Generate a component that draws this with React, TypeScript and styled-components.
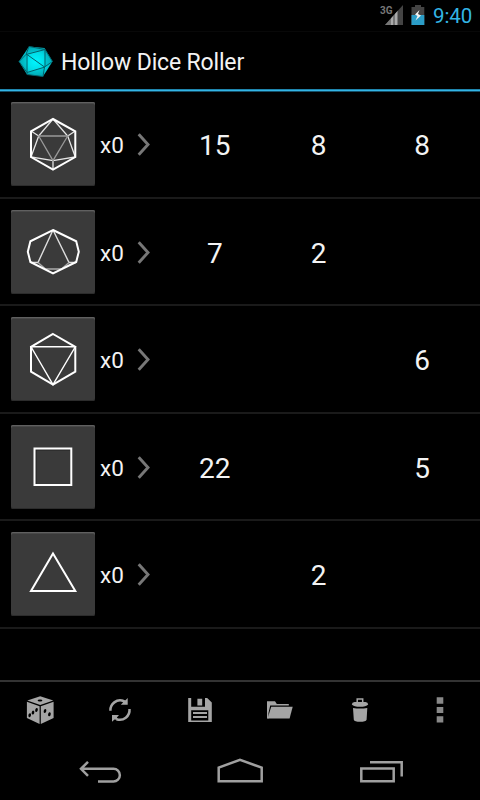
import React from "react";
import styled, { createGlobalStyle } from "styled-components";

const GlobalStyle = createGlobalStyle`
  * { box-sizing: border-box; }
  html, body { margin: 0; background: #000; }
  body { font-family: Roboto, "Noto Sans", sans-serif; color: #f3f3f3; overflow: hidden; }
  svg { display: block; flex: none; }
`;

const Screen = styled.div`
  width: 480px;
  height: 800px;
  background: #000;
  display: flex;
  flex-direction: column;
`;

const StatusBar = styled.div`
  height: 32px;
  border-bottom: 1px solid #080808;
  display: flex;
  justify-content: flex-end;
  align-items: flex-start;
  padding-right: 8px;
`;

const Clock = styled.span`
  width: 39px;
  margin-left: 8px;
  font-size: 20.5px;
  line-height: 32px;
  letter-spacing: -0.1px;
  color: #33b5e5;
  white-space: nowrap;
`;

const NetworkLabel = styled.span`
  font-size: 10px;
  font-weight: 700;
  line-height: 12px;
  padding-top: 5px;
  width: 5px;
  color: #777;
  white-space: nowrap;
`;

const ActionBar = styled.header`
  height: 60px;
  background: linear-gradient(#1f85ad 0 1px, #33b5e5 1px 2px, #14506a 2px) bottom / 100% 3px no-repeat;
  display: flex;
  align-items: center;
  padding-left: 17px;
`;

const Title = styled.h1`
  margin: 1px 0 0 6px;
  font-size: 23px;
  font-weight: 400;
  line-height: 30px;
  letter-spacing: -0.16px;
  white-space: nowrap;
`;

const DiceList = styled.main`
  flex: 1;
  margin-top: -1px;
  display: grid;
  grid-template-rows: 108px 107px 108px 107px 108px;
`;

const DiceRow = styled.div`
  display: grid;
  grid-template-columns: 84px 31px 27px 10px repeat(3, 103.7px);
  padding: 11px 0 0 11px;
  border-bottom: 2px solid #1a1a1a;
`;

const DieButton = styled.button`
  width: 84px;
  height: 84px;
  padding: 0;
  border: 0;
  border-radius: 2px;
  background: #3a3a3a;
  box-shadow: inset 0 1px #606060, inset 0 2px #484848, inset 0 -1px #2c2c2c;
`;

const Count = styled.span`
  padding-left: 5px;
  font-size: 22.5px;
  line-height: 87px;
  white-space: nowrap;
`;

const Result = styled.span`
  font-size: 28px;
  line-height: 88px;
  height: 84px;
  text-align: center;
`;

const Toolbar = styled.footer`
  height: 60px;
  border-top: 2px solid #333;
  display: grid;
  grid-template-columns: repeat(6, 80px);
`;

const ToolButton = styled.button`
  padding: 0;
  border: 0;
  background: none;
`;

const NavBar = styled.nav`
  height: 60px;
  display: flex;
  justify-content: space-between;
  padding: 0 60px;
`;

const D20 = () => (
  <>
    <g fill="none" stroke="#e6e6e6" strokeWidth="1.3">
      <path d="M42 17 27.7 34 20 29M27.7 34 20 55 42 58.7 64.3 55 56.7 34 42 17M56.7 34 64.3 29M42 58.7V68" />
      <path d="M27.7 34H56.7L42 58.7Z" stroke="#999" />
    </g>
    <path d="M42 17 64.3 29.3V55L42 67.7 20 55V29.3Z" />
  </>
);
const D10 = () => (
  <>
    <path d="M42 20 27 52.5H20M42 20 58 52.5H65" strokeWidth="1.4" stroke="#ddd" />
    <path d="M27 52.5 34.5 59H50.5L58 52.5" strokeWidth="1.4" stroke="#aaa" />
    <path d="M42 20 65.2 31.3 67.8 41.7 65.2 52 42 63.3 19.4 52 16.8 41.7 19.4 31.3Z" />
  </>
);
const D8 = () => (
  <>
    <path d="M20 29.8H64.3L42 67.5Z" strokeWidth="1.4" />
    <path d="M42 17 64.3 29.8V54.7L42 67.5 20 54.7V29.8Z" />
  </>
);
const D6 = () => (
  <>
    <path d="M25 59V25H59" stroke="#222" strokeWidth="1" />
    <path d="M23.5 23.5H60.3V60H23.5Z" />
  </>
);
const D4 = () => <path d="M42 21.5 64.3 59H20Z" />;

const dice = [
  { Shape: D20, results: ["15", "8", "8"] },
  { Shape: D10, results: ["7", "2", ""] },
  { Shape: D8, results: ["", "", "6"] },
  { Shape: D6, results: ["22", "", "5"] },
  { Shape: D4, results: ["", "2", ""] },
];

const Logo = () => (
  <svg width="38" height="38" viewBox="0 0 38 38">
    <defs>
      <radialGradient id="glow">
        <stop offset="0" stopColor="#00f6ff" />
        <stop offset="0.6" stopColor="#00dce6" />
        <stop offset="1" stopColor="#00b5c0" />
      </radialGradient>
    </defs>
    <path d="M12 3.5 27.5 5 35.5 18.5 26 33.5 10 31.5 2 18.5Z" fill="url(#glow)" />
    <path d="M12 3.5 9 11.5 2 18.5 10 29.5 10 31.5 26 33.5 27.5 24 35.5 18.5 28 6.5 12 3.5M9 11.5 28 6.5V24L10 29.5V11.5L27.5 24" fill="none" stroke="#045f68" strokeWidth="1" />
    <path d="M12 3.5 27.5 5 28 6.5 9 11.5ZM27.5 5 35.5 18.5 28 24ZM10 29.5 27.5 24 26 33.5 10 31.5ZM9 11.5 10 29.5 2 18.5Z" fill="#007d8a" opacity="0.22" />
  </svg>
);

const Signal = () => (
  <svg width="18" height="26" viewBox="0 0 18 26">
    <path d="M0 25 18 5V25Z" fill="#444" />
    <path d="M0 25 13 10.5V25Z" fill="#777" />
    <path d="M6 18.5 8 16.2V25H6ZM10 14 12 11.8V25H10Z" fill="#aaa" />
  </svg>
);

const BatteryIcon = styled.svg`
  margin-left: 8px;
`;

const Battery = () => (
  <BatteryIcon width="14" height="26" viewBox="0 0 14 26">
    <path d="M4 5H10V7H13.3V25H0.5V7H4Z" fill="#444" />
    <path d="M0.5 15H13.3V25H0.5Z" fill="#2b9dc7" />
    <path d="M8.5 10 4 14.5 6.5 16 4.5 20.5 10 15.5 7 14Z" fill="#f4f4f4" />
  </BatteryIcon>
);

const Chevron = () => (
  <svg width="27" height="84" viewBox="0 0 27 84">
    <path d="M12.7 32.2 22 42.5 12.7 52.8" fill="none" stroke="#777" strokeWidth="2.9" />
  </svg>
);

const toolIcons = [
  <>
    <path d="M27.3 18.6 40.2 14.2 53.3 18.6 40.2 23Z" />
    <path d="M26.9 19.8 39.6 24.2V42L26.9 36ZM53.6 19.8 40.8 24.2V42L53.6 36Z" />
    <g fill="#000">
      <ellipse cx="40" cy="18.5" rx="2.4" ry="1.1" />
      <ellipse cx="29.7" cy="33.2" rx="1.3" ry="2" transform="rotate(15 29.7 33.2)" />
      <ellipse cx="33" cy="30.6" rx="1.3" ry="2" transform="rotate(15 33 30.6)" />
      <ellipse cx="36.5" cy="28" rx="1.3" ry="2" transform="rotate(15 36.5 28)" />
      <ellipse cx="45" cy="29" rx="1.3" ry="2" transform="rotate(15 45 29)" />
      <ellipse cx="49.4" cy="32.3" rx="1.3" ry="2" transform="rotate(15 49.4 32.3)" />
    </g>
  </>,
  <>
    <path d="M30.4 28.8A9.8 9.8 0 0 1 43.5 19M49.5 27A9.8 9.8 0 0 1 36.5 37.2" fill="none" stroke="#a5a5a5" strokeWidth="2.5" />
    <path d="M47.7 16V22.8H40.8L43 20.4 42.2 17.8 45.5 18.2ZM32 39.8V33H39L36.9 35.4 38 38 34.5 37.5Z" />
  </>,
  <path fillRule="evenodd" d="M28.2 15.9H31.2V24.8H45V15.9H47.2L51.8 20.5V40H28.2ZM37.4 16.8H42.2V23.5H37.4ZM31.2 28.3H48.3V38.5H31.2ZM33 30V32H47V30ZM33 34V36H47V34Z" />,
  <>
    <path d="M27 36.5V19.2H35L36.8 22H48.8V23.5H30.2L28.5 31V36.5Z" />
    <path d="M31.2 24.7H52.7L49.6 36.6H27.6Z" />
  </>,
  <>
    <path d="M37.2 21V17H42.7V21" fill="none" stroke="#a5a5a5" strokeWidth="1.5" />
    <path d="M31.8 22.5Q32 20.4 34.5 20H45.5Q48 20.4 48.2 22.5 46 24.8 40 24.8 34 24.8 31.8 22.5ZM33 26Q40 27.2 47.3 26L46.6 37.7Q45.8 39.8 40 39.8 34.5 39.8 33.8 37.7Z" />
  </>,
  <path fill="#888" d="M36.7 15.3H43.3V21.7H36.7ZM36.7 25H43.3V31H36.7ZM36.7 34.3H43.3V40.5H36.7Z" />,
];

const navIcons = [
  <path d="M88 21.8 81 28.8 88 35.8M82 28.8H113.5A6.3 6.3 0 0 1 113.5 41.5H98" transform="translate(-60)" />,
  <path d="M218.7 41.3V27.6L240 19.8 261.7 27.6V41.3Z" transform="translate(-200)" />,
  <path d="M361.3 28.5H393.7V41.3H361.3ZM370 22.3H401.7V36.5" transform="translate(-340)" />,
];

export default function App() {
  return (
    <>
      <GlobalStyle />
      <Screen>
        <StatusBar>
          <NetworkLabel>3G</NetworkLabel>
          <Signal />
          <Battery />
          <Clock>9:40</Clock>
        </StatusBar>
        <ActionBar>
          <Logo />
          <Title>Hollow Dice Roller</Title>
        </ActionBar>
        <DiceList>
          {dice.map(({ Shape, results }, i) => (
            <DiceRow key={i}>
              <DieButton>
                <svg width="84" height="84" viewBox="0 0 84 84" fill="none" stroke="#fff" strokeWidth="2">
                  <Shape />
                </svg>
              </DieButton>
              <Count>x0</Count>
              <Chevron />
              <span />
              {results.map((value, n) => (
                <Result key={n}>{value}</Result>
              ))}
            </DiceRow>
          ))}
        </DiceList>
        <Toolbar>
          {toolIcons.map((icon, i) => (
            <ToolButton key={i}>
              <svg width="80" height="58" viewBox="0 0 80 58" fill="#a5a5a5">{icon}</svg>
            </ToolButton>
          ))}
        </Toolbar>
        <NavBar>
          {navIcons.map((icon, i) => (
            <svg key={i} width="80" height="60" viewBox="0 0 80 60" fill="none" stroke="#a0a0a0" strokeWidth="2.5">{icon}</svg>
          ))}
        </NavBar>
      </Screen>
    </>
  );
}
